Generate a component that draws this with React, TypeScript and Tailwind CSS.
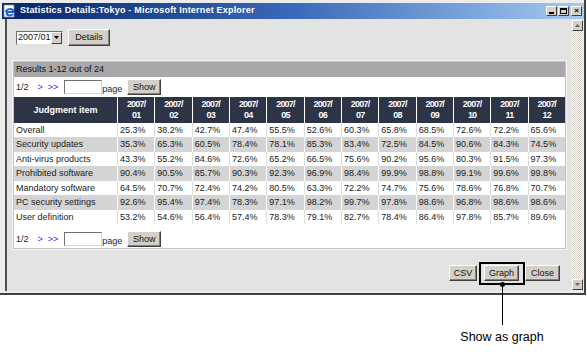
import * as React from 'react'

const MONTHS = ['01', '02', '03', '04', '05', '06', '07', '08', '09', '10', '11', '12']

const ROWS: [string, string[]][] = [
  ['Overall', ['25.3', '38.2', '42.7', '47.4', '55.5', '52.6', '60.3', '65.8', '68.5', '72.6', '72.2', '65.6']],
  ['Security updates', ['35.3', '65.3', '60.5', '78.4', '78.1', '85.3', '83.4', '72.5', '84.5', '90.6', '84.3', '74.5']],
  ['Anti-virus products', ['43.3', '55.2', '84.6', '72.6', '65.2', '66.5', '75.6', '90.2', '95.6', '80.3', '91.5', '97.3']],
  ['Prohibited software', ['90.4', '90.5', '85.7', '90.3', '92.3', '96.9', '98.4', '99.9', '98.8', '99.1', '99.6', '99.8']],
  ['Mandatory software', ['64.5', '70.7', '72.4', '74.2', '80.5', '63.3', '72.2', '74.7', '75.6', '78.6', '76.8', '70.7']],
  ['PC security settings', ['92.6', '95.4', '97.4', '78.3', '97.1', '98.2', '99.7', '97.8', '98.6', '96.8', '98.6', '98.6']],
  ['User definition', ['53.2', '54.6', '56.4', '57.4', '78.3', '79.1', '82.7', '78.4', '86.4', '97.8', '85.7', '89.6']],
]

// classic raised 3d button
function Btn({ children, w }: { children: React.ReactNode; w: string }) {
  return (
    <div
      className={`${w} h-[16px] flex items-center justify-center bg-[#d4d0c8] border border-t-white border-l-white border-r-[#404040] border-b-[#404040] shadow-[inset_-1px_-1px_0_#808080] text-[9px] text-[#111] leading-none`}
    >
      {children}
    </div>
  )
}

function Pager() {
  return (
    <div className="flex items-center text-[9px] text-[#222] leading-none">
      <span className="ml-[2px]">1/2</span>
      <span className="ml-[9px] text-[#3333ff]">&gt;</span>
      <span className="ml-[5px] text-[#3333ff]">&gt;&gt;</span>
      <div className="ml-[6px] w-[38px] h-[14px] bg-white border border-t-[#707070] border-l-[#707070] border-r-[#d8d8d8] border-b-[#d8d8d8]" />
      <span className="self-end mb-[1px]">page</span>
      <div className="ml-[5px]">
        <Btn w="w-[34px]">Show</Btn>
      </div>
    </div>
  )
}

function TitleButton({ children }: { children: React.ReactNode }) {
  return (
    <div className="w-[11px] h-[10px] bg-[#d4d0c8] border border-t-white border-l-white border-r-[#404040] border-b-[#404040] flex items-center justify-center text-[8px] font-bold text-black leading-none">
      {children}
    </div>
  )
}

function ScrollArrow({ up }: { up: boolean }) {
  return (
    <div className="w-[11px] h-[11px] bg-[#d4d0c8] border border-t-white border-l-white border-r-[#404040] border-b-[#404040] flex items-center justify-center">
      <svg width="5" height="3" viewBox="0 0 5 3">
        {up ? <polygon points="2.5,0 5,3 0,3" fill="#606060" /> : <polygon points="0,0 5,0 2.5,3" fill="#606060" />}
      </svg>
    </div>
  )
}

export default function App() {
  return (
    <div className="relative w-[587px] h-[354px] bg-white overflow-hidden font-['Liberation_Sans',Arial,sans-serif]">
      {/* IE window */}
      <div className="w-[586px] h-[295px] flex flex-col bg-[#ececec] pt-[3px] pl-[2px] border-r-2 border-b-2 border-[#404040]">
        {/* Title bar */}
        <div className="h-[16px] flex items-center bg-linear-to-r from-[#0a246a] via-[#3a6ab8] to-[#a6caf0] pl-[1px] pr-[2px]">
          <svg width="14" height="14" viewBox="0 0 14 14">
            <rect x="1" y="1" width="10" height="12" fill="#ffffff" stroke="#7a8aa8" strokeWidth="0.8" />
            <path d="M3 8 H11 M3 8 C3 4.5 10.5 4 10.5 7.5 M10 10 C8.5 12 4 12 3.5 9" stroke="#1f5fd0" strokeWidth="2" fill="none" />
          </svg>
          <span className="ml-[3px] text-[9px] font-bold text-white tracking-[0.2px]">
            Statistics Details:Tokyo - Microsoft Internet Explorer
          </span>
          <div className="ml-auto flex items-center">
            <TitleButton>
              <span className="block w-[5px] h-[2px] bg-black mt-[4px]" />
            </TitleButton>
            <div className="ml-[1px]">
              <TitleButton>
                <span className="block w-[7px] h-[6px] border border-t-2 border-black" />
              </TitleButton>
            </div>
            <div className="ml-[2px]">
              <TitleButton>×</TitleButton>
            </div>
          </div>
        </div>

        {/* Body */}
        <div className="flex-1 flex pl-[3px] pb-[2px]">
          {/* Client area */}
          <div className="flex-1 flex flex-col bg-[#e3e3e3] border-l-2 border-[#505050] pt-[10px]">
            <div className="flex items-center h-[17px] pl-[9px]">
              <div className="w-[47px] h-[14px] flex items-center bg-white border border-t-[#707070] border-l-[#707070] border-r-[#e0e0e0] border-b-[#e0e0e0]">
                <span className="ml-[1px] text-[9px] text-[#111] leading-none">2007/01</span>
                <div className="ml-auto w-[11px] h-[12px] bg-[#d4d0c8] border border-t-white border-l-white border-r-[#404040] border-b-[#404040] flex items-center justify-center">
                  <svg width="5" height="3" viewBox="0 0 5 3">
                    <polygon points="0,0 5,0 2.5,3" fill="#000" />
                  </svg>
                </div>
              </div>
              <div className="ml-[5px]">
                <Btn w="w-[42px] h-[17px]">Details</Btn>
              </div>
            </div>

            {/* Results panel */}
            <div className="mt-[15px] ml-[6px] mr-[5px] bg-white border border-[#c4c4c4] shadow-[0_0_0_1px_#f4f4f4]">
              <div className="h-[15px] bg-[#a9a7aa] flex items-center pl-[2px]">
                <span className="text-[9px] text-[#111] leading-none whitespace-nowrap">Results 1-12 out of 24</span>
              </div>
              <div className="h-[20px] flex items-center">
                <Pager />
              </div>
              <table className="w-[551px] table-fixed border-separate border-spacing-0 text-[9px] leading-none">
                <colgroup>
                  <col className="w-[103px]" />
                  {MONTHS.map((m) => (
                    <col key={m} />
                  ))}
                </colgroup>
                <thead>
                  <tr className="h-[26px] bg-[#2c3445] text-white">
                    <th className="font-bold text-center">Judgment item</th>
                    {MONTHS.map((m) => (
                      <th key={m} className="border-l border-white font-bold text-center leading-[11px] tracking-[-0.8px]">
                        2007/
                        <br />
                        {m}
                      </th>
                    ))}
                  </tr>
                </thead>
                <tbody>
                  {ROWS.map(([label, vals], i) => {
                    const gray = i % 2 === 1
                    return (
                      <tr key={label} className={`${i % 2 === 0 ? 'h-[14px]' : 'h-[15px]'} ${gray ? 'bg-[#d4d4d4]' : 'bg-white'} text-[#1a1a1a]`}>
                        <td className="pl-[2px] whitespace-nowrap">{label}</td>
                        {vals.map((v, j) => (
                          <td key={j} className={`pl-[2px] border-l ${gray ? 'border-white' : 'border-[#dedede]'}`}>
                            {v}%
                          </td>
                        ))}
                      </tr>
                    )
                  })}
                </tbody>
              </table>
              <div className="pt-[7px] pb-[1px] flex items-center">
                <Pager />
              </div>
            </div>

            {/* Bottom buttons */}
            <div className="mt-[16px] flex justify-end pr-[11px]">
              <Btn w="w-[28px]">CSV</Btn>
              <div className="ml-[7px]">
                <Btn w="w-[35px]">Graph</Btn>
              </div>
              <div className="ml-[6px]">
                <Btn w="w-[35px]">Close</Btn>
              </div>
            </div>
          </div>

          {/* Vertical scrollbar */}
          <div className="w-[12px] mr-[1px] flex flex-col items-center justify-between py-[1px] bg-[repeating-conic-gradient(#ffffff_0_25%,#d4d0c8_0_50%)] bg-[length:2px_2px]">
            <ScrollArrow up />
            <ScrollArrow up={false} />
          </div>
        </div>
      </div>

      {/* Callout annotation */}
      <div className="absolute left-[479px] top-[262px] w-[46px] h-[23px] border-2 border-black" />
      <div className="absolute left-[500px] top-[282px] w-[5px] h-[5px] rounded-full bg-black" />
      <div className="absolute left-[502px] top-[285px] w-[1px] h-[40px] bg-black" />
      <div className="absolute left-[440px] top-[329px] w-[124px] text-center text-[12.5px] text-black leading-[16px]">
        Show as graph
      </div>
    </div>
  )
}
